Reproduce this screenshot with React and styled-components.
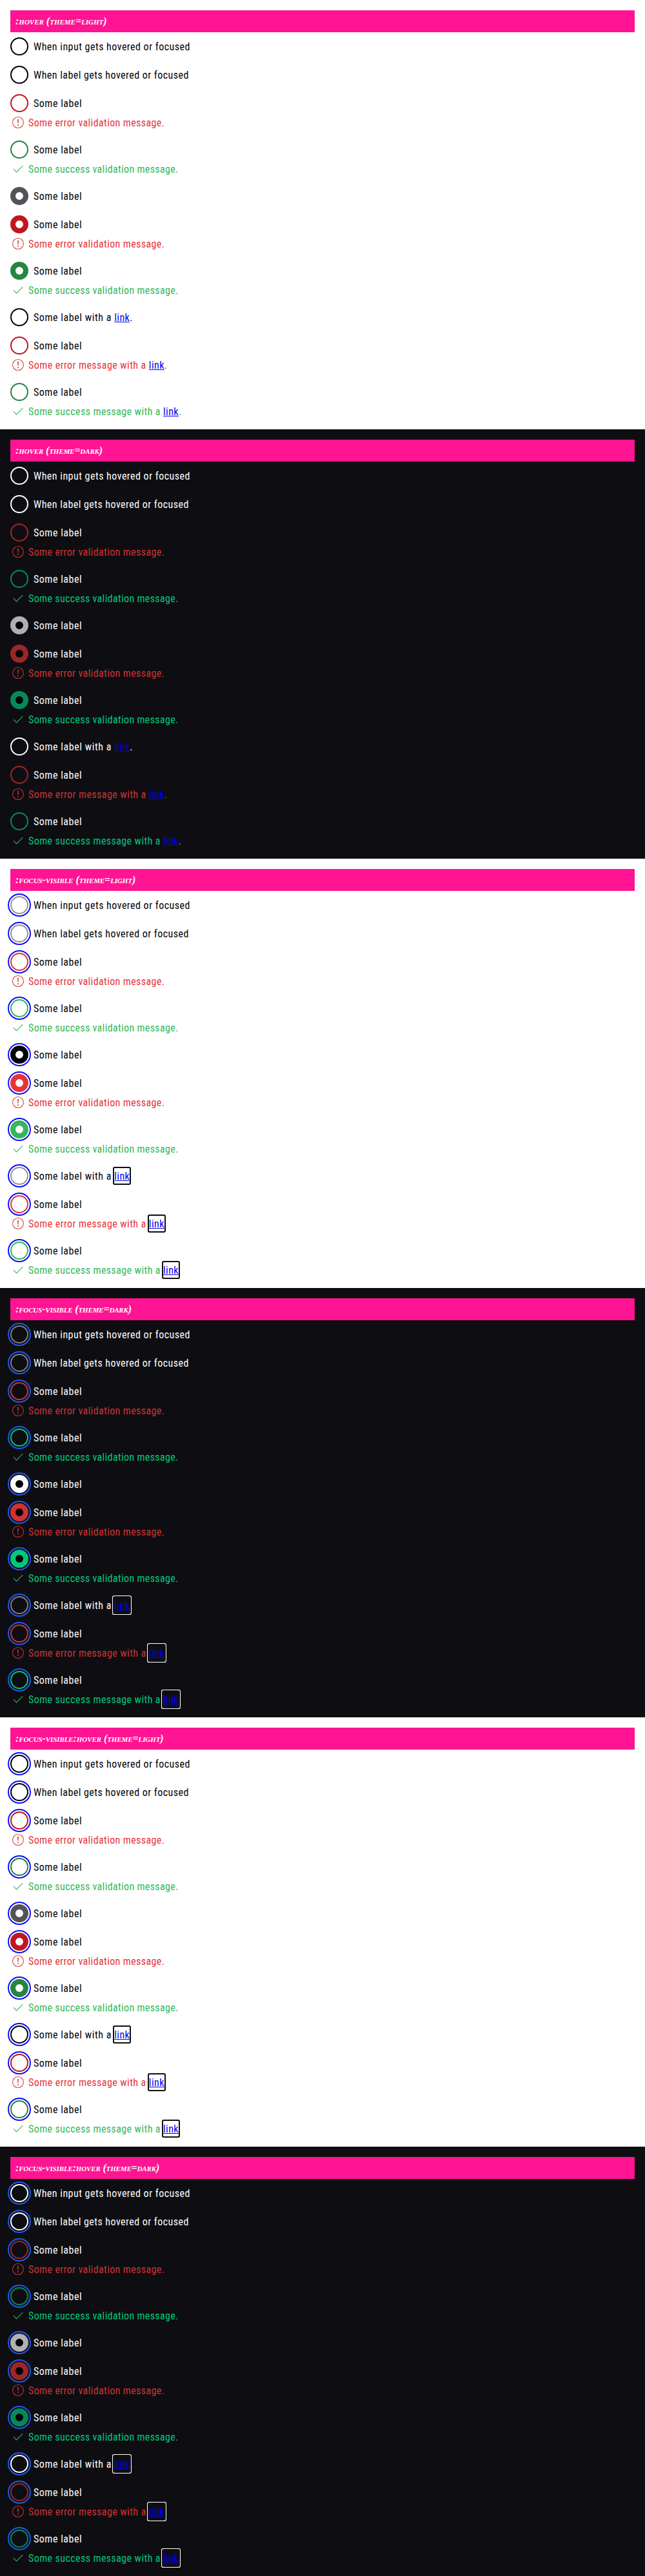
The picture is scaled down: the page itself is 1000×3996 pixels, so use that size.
import React from "react";
import styled, { createGlobalStyle } from "styled-components";

const palettes = {
  light: {
    page: "#ffffff", text: "#010205", dot: "#fbfcff", ring: "#0f0fff",
    neutral: "#949598", neutralHover: "#010205", filled: "#010205", filledHover: "#535457",
    error: "#e8323b", errorHover: "#c4151f", success: "#33b85a", successHover: "#248641",
    errorText: "#e8323b", successText: "#33b85a", errorIcon: "#cf4a43", successIcon: "#3fb765",
  },
  dark: {
    page: "#0e0e12", text: "#fbfcff", dot: "#010205", ring: "#1f58e8",
    neutral: "#7c7d80", neutralHover: "#fbfcff", filled: "#fbfcff", filledHover: "#afb0b3",
    error: "#cf3232", errorHover: "#9b2628", success: "#00c87c", successHover: "#058a57",
    errorText: "#cf3232", successText: "#00c87c", errorIcon: "#bd3330", successIcon: "#35a94e",
  },
};

const GlobalStyle = createGlobalStyle`
  * { box-sizing: border-box; }
  body { margin: 0; background: #fff; }
`;

const Section = styled.section`
  display: flex;
  flex-direction: column;
  gap: 16px;
  height: 666px;
  padding: 16px;
  background: ${(p) => p.$c.page};
  color: ${(p) => p.$c.text};
  font: condensed 16px/26px Roboto, "Liberation Sans Narrow", sans-serif;
`;

const Heading = styled.h2`
  height: 34px;
  margin: 0 0 -8px;
  padding: 2px 8px;
  background: #ff1493;
  color: #fff;
  font: italic small-caps bold 16px/30px "Liberation Serif", serif;
  letter-spacing: ${(p) => p.$spacing}px;
`;

const Field = styled.div`
  display: flex;
  flex-direction: column;
  gap: 4px;
`;

const Label = styled.label`
  display: flex;
  align-items: center;
  gap: 8px;
  height: 28px;
`;

const Text = styled.span`
  height: 24px;
  white-space: pre;
  letter-spacing: ${(p) => p.$spacing}px;
`;

const Radio = styled.span`
  flex: none;
  width: 28px;
  height: 28px;
  border: ${(p) => (p.$checked ? "8px" : "2px")} solid ${(p) => p.$color};
  border-radius: 50%;
  background: ${(p) => (p.$checked ? p.$dot : "transparent")};
  outline: ${(p) => (p.$ring ? `2px solid ${p.$ring}` : "none")};
  outline-offset: 2px;
`;

const Message = styled.div`
  display: flex;
  gap: 4px;
  height: 24px;
  color: ${(p) => p.$color};
`;

const Icon = styled.svg`
  flex: none;
  width: 24px;
  height: 24px;
  fill: none;
  stroke: ${(p) => p.$color};
  stroke-width: 1.1;
`;

const Link = styled.a`
  position: relative;
  display: inline-block;
  height: 24px;
  color: #0000ee;
  letter-spacing: 0.42px;
  text-decoration: underline;
  border-radius: 1px;
  box-shadow: ${(p) => (p.$focus ? "0 0 0 2px #101010, 0 0 0 3px #fff" : "none")};
`;

const fields = [
  { label: "When input gets hovered or focused", spacing: 0.48 },
  { label: "When label gets hovered or focused", spacing: 0.46 },
  { state: "error", message: "validation message.", messageSpacing: 0.38 },
  { state: "success", message: "validation message.", messageSpacing: 0.34 },
  { checked: true },
  { checked: true, state: "error", message: "validation message.", messageSpacing: 0.38 },
  { checked: true, state: "success", message: "validation message.", messageSpacing: 0.34 },
  { label: "Some label with a ", spacing: 0.56, labelLink: true },
  { state: "error", message: "message with a ", messageSpacing: 0.43, messageLink: true },
  { state: "success", message: "message with a ", messageSpacing: 0.41, messageLink: true },
];

function StateIcon({ state, color }) {
  return state === "error" ? (
    <Icon viewBox="0 0 24 24" $color={color}>
      <circle cx="12" cy="12" r="8.5" />
      <path d="M11 7h2l-.45 6.8h-1.1zM11.1 15.2h1.8V17h-1.8z" fill={color} stroke="none" />
    </Icon>
  ) : (
    <Icon viewBox="0 0 24 24" $color={color}>
      <path d="M4.9 12.2 9.6 17 19.3 7.2" />
    </Icon>
  );
}

function RadioField({ field, c, hover, focus }) {
  const { label = "Some label", spacing = 0.52, state, checked, message, messageSpacing, labelLink, messageLink } = field;
  const base = state || (checked ? "filled" : "neutral");
  const link = <Link href="#" $focus={focus}>link</Link>;
  return (
    <Field>
      <Label>
        <Radio $checked={checked} $color={c[hover ? base + "Hover" : base]} $dot={c.dot} $ring={focus && c.ring} />
        <Text $spacing={spacing}>
          {label}
          {labelLink && <>{link}.</>}
        </Text>
      </Label>
      {message && (
        <Message $color={c[state + "Text"]}>
          <StateIcon state={state} color={c[state + "Icon"]} />
          <Text $spacing={messageSpacing}>
            {`Some ${state} ${message}`}
            {messageLink && <>{link}.</>}
          </Text>
        </Message>
      )}
    </Field>
  );
}

const groups = [
  { name: ":hover", hover: true, spacing: { light: 0, dark: -0.12 } },
  { name: ":focus-visible", focus: true, spacing: { light: -0.08, dark: -0.16 } },
  { name: ":focus-visible:hover", hover: true, focus: true, spacing: { light: -0.08, dark: -0.15 } },
];

export default function App() {
  return (
    <>
      <GlobalStyle />
      {groups.map((g) =>
        ["light", "dark"].map((theme) => (
          <Section key={g.name + theme} $c={palettes[theme]}>
            <Heading $spacing={g.spacing[theme]}>{`${g.name} (theme=${theme})`}</Heading>
            {fields.map((f, i) => (
              <RadioField key={i} field={f} c={palettes[theme]} hover={g.hover} focus={g.focus} />
            ))}
          </Section>
        ))
      )}
    </>
  );
}
